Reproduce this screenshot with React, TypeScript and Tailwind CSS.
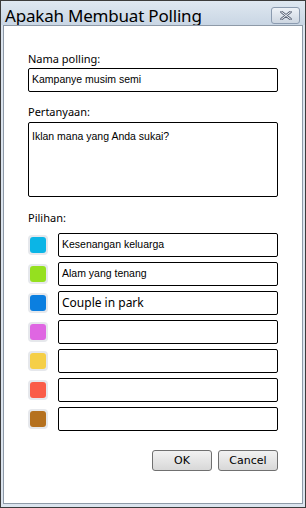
import React from 'react';

const swatches = ['#0bb5e6', '#95e01f', '#0b7fe0', '#df66e2', '#f5cf47', '#fa5c48', '#b5711f'];
const choices = ['Kesenangan keluarga', 'Alam yang tenang', 'Couple in park', '', '', '', ''];

const App: React.FC = () => {
  return (
    <div className="w-[306px] h-[508px] bg-[#3c3c3c] p-px" style={{ fontFamily: '"Noto Sans", sans-serif' }}>
      <div className="w-full h-full flex flex-col bg-[#dbe4ee]">
        <div className="h-[24px] flex items-center justify-between pl-[4px] pr-[5px] bg-gradient-to-b from-[#dfe8f1] to-[#c9d6e4]">
          <span className="text-[17px] leading-none text-black tracking-[-0.2px] mt-[4px]">Apakah Membuat Polling</span>
          <button className="w-[29px] h-[17px] mt-[4px] rounded-[3px] border border-[#8b9bb0] bg-gradient-to-b from-[#eef2f7] to-[#cdd6e1] flex items-center justify-center">
            <svg width="12" height="9" viewBox="0 0 12 9">
              <path d="M1.5 1 L10.5 8 M10.5 1 L1.5 8" stroke="#5a6478" strokeWidth="2.6" strokeLinecap="round" />
              <path d="M1.5 1 L10.5 8 M10.5 1 L1.5 8" stroke="#f4f6f9" strokeWidth="1" strokeLinecap="round" />
            </svg>
          </button>
        </div>
        <div className="flex-1 mx-[2px] mb-[3px] border border-[#8e9aa8] bg-white flex flex-col px-[24px]">
          <label className="mt-[25px] text-[11px] leading-[15px] text-black">Nama polling:</label>
          <div className="mt-[2px] h-[24px] border border-black rounded-[2px] flex items-center px-[3px] text-[10.5px] text-black" style={{ fontFamily: '"Liberation Sans", sans-serif' }}>
            Kampanye musim semi
          </div>
          <label className="mt-[12px] text-[11px] leading-[15px] text-black">Pertanyaan:</label>
          <div className="mt-[3px] h-[75px] border border-black rounded-[2px] px-[3px] pt-[7px] text-[10.5px] leading-[13px] text-black" style={{ fontFamily: '"Liberation Sans", sans-serif' }}>
            Iklan mana yang Anda sukai?
          </div>
          <label className="mt-[13px] text-[11px] leading-[15px] text-black">Pilihan:</label>
          <div className="mt-[8px] flex flex-col gap-[5px]">
            {choices.map((c, i) => (
              <div key={i} className="flex items-center h-[24px]">
                <div className="w-[20px] h-[20px] rounded-[4px] bg-[#e6e8ec] flex items-center justify-center">
                  <div className="w-[16px] h-[16px] rounded-[3px]" style={{ backgroundColor: swatches[i] }} />
                </div>
                <div
                  className={`ml-[10px] flex-1 h-[24px] border border-black rounded-[2px] flex items-center px-[3px] text-black ${i === 2 ? 'text-[12px]' : 'text-[10.5px]'}`}
                  style={{ fontFamily: i === 2 ? '"Noto Sans", sans-serif' : '"Liberation Sans", sans-serif' }}
                >
                  {c}
                </div>
              </div>
            ))}
          </div>
          <div className="mt-[19px] flex justify-end gap-[6px]">
            <button className="w-[60px] h-[21px] rounded-[3px] border border-[#707070] bg-gradient-to-b from-[#f2f2f2] to-[#d8d8d8] text-[11px] text-black leading-none" style={{ fontFamily: '"DejaVu Sans", sans-serif' }}>OK</button>
            <button className="w-[60px] h-[21px] rounded-[3px] border border-[#707070] bg-gradient-to-b from-[#f2f2f2] to-[#d8d8d8] text-[11px] text-black leading-none" style={{ fontFamily: '"DejaVu Sans", sans-serif' }}>Cancel</button>
          </div>
        </div>
      </div>
    </div>
  );
};

export default App;
